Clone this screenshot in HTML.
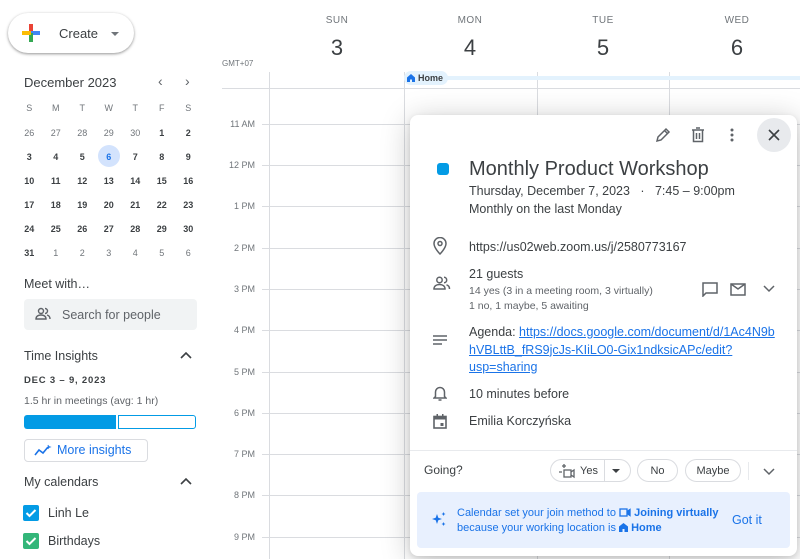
<!DOCTYPE html>
<html><head><meta charset="utf-8"><style>
*{margin:0;padding:0;box-sizing:border-box}
body{width:800px;height:559px;overflow:hidden;background:#fff;font-family:"Liberation Sans",Arial,sans-serif;color:#3c4043;position:relative}
.a{position:absolute}
.hl{position:absolute;left:262px;width:538px;height:1px;background:#dadce0}
.vl{position:absolute;top:72px;bottom:0;width:1px;background:#dadce0}
.tm{position:absolute;left:215px;width:40px;text-align:right;font-size:9px;color:#70757a}
.dh{position:absolute;width:60px;text-align:center;font-size:10px;color:#70757a;letter-spacing:.5px}
.dn{position:absolute;width:60px;text-align:center;font-size:22px;color:#3c4043}
.cal td{width:26.5px;height:24px;text-align:center;font-size:9px;color:#3c4043;font-weight:bold}
.cal td.g{color:#70757a;font-weight:normal}
.cal th{height:26px;font-size:9px;color:#70757a;font-weight:normal}
.ic{position:absolute;left:433px}
.t{position:absolute;left:469px;font-size:12px;color:#3c4043}
.pill{position:absolute;top:459px;height:23px;border:1px solid #dadce0;border-radius:12px;font-size:11px;color:#3c4043;text-align:center;line-height:23px}
</style></head><body>

<div class="a" style="left:8px;top:13px;width:126px;height:40px;border-radius:20px;box-shadow:0 1px 3px rgba(0,0,0,.3),0 1px 2px rgba(0,0,0,.15);background:#fff"></div>
<svg class="a" style="left:20px;top:22px" width="22" height="22" viewBox="0 0 22 22"><rect x="9" y="2" width="4" height="9" fill="#ea4335"/><rect x="11" y="9" width="9" height="4" fill="#4285f4"/><rect x="9" y="11" width="4" height="9" fill="#34a853"/><rect x="2" y="9" width="9" height="4" fill="#fbbc04"/></svg>
<div class="a" style="left:59px;top:26px;font-size:13px;color:#3c4043">Create</div>
<div class="a" style="left:111px;top:32px;border-left:4px solid transparent;border-right:4px solid transparent;border-top:4px solid #70757a"></div>

<div class="a" style="left:24px;top:75px;font-size:13px;color:#3c4043">December 2023</div>
<div class="a" style="left:158px;top:73px;font-size:14px;color:#5f6368">&#8249;</div>
<div class="a" style="left:185px;top:73px;font-size:14px;color:#5f6368">&#8250;</div>
<div class="a" style="left:98px;top:145px;width:22px;height:22px;border-radius:50%;background:#d3e3fd"></div>
<table class="a cal" style="left:16px;top:95px;border-collapse:collapse">
<tr><th>S</th><th>M</th><th>T</th><th>W</th><th>T</th><th>F</th><th>S</th></tr>
<tr><td class="g">26</td><td class="g">27</td><td class="g">28</td><td class="g">29</td><td class="g">30</td><td>1</td><td>2</td></tr>
<tr><td>3</td><td>4</td><td>5</td><td style="color:#1a73e8">6</td><td>7</td><td>8</td><td>9</td></tr>
<tr><td>10</td><td>11</td><td>12</td><td>13</td><td>14</td><td>15</td><td>16</td></tr>
<tr><td>17</td><td>18</td><td>19</td><td>20</td><td>21</td><td>22</td><td>23</td></tr>
<tr><td>24</td><td>25</td><td>26</td><td>27</td><td>28</td><td>29</td><td>30</td></tr>
<tr><td>31</td><td class="g">1</td><td class="g">2</td><td class="g">3</td><td class="g">4</td><td class="g">5</td><td class="g">6</td></tr>
</table>

<div class="a" style="left:24px;top:277px;font-size:12.5px">Meet with…</div>
<div class="a" style="left:24px;top:299px;width:173px;height:31px;background:#f1f3f4;border-radius:4px"></div>
<svg class="a" style="left:35px;top:307px" width="16" height="14" viewBox="0 0 16 14" fill="none" stroke="#5f6368" stroke-width="1.4"><circle cx="6" cy="4" r="2.5"/><path d="M1 12c0-3 2.5-4 5-4s5 1 5 4z"/><path d="M10 1.5a2.5 2.5 0 0 1 0 5M12 8c2 .5 3 1.5 3 4"/></svg>
<div class="a" style="left:62px;top:308px;font-size:12.5px;color:#5f6368">Search for people</div>

<div class="a" style="left:24px;top:349px;font-size:12.5px">Time Insights</div>
<svg class="a" style="left:179px;top:350px" width="14" height="10"><path d="M2 8l5-5 5 5" fill="none" stroke="#3c4043" stroke-width="1.6"/></svg>
<div class="a" style="left:24px;top:375px;font-size:9.5px;font-weight:bold;letter-spacing:.8px;color:#3c4043">DEC 3 – 9, 2023</div>
<div class="a" style="left:24px;top:395px;font-size:10.5px;color:#5f6368">1.5 hr in meetings (avg: 1 hr)</div>
<div class="a" style="left:24px;top:415px;width:92px;height:14px;background:#039be5;border-radius:3px 0 0 3px"></div>
<div class="a" style="left:118px;top:415px;width:78px;height:14px;border:1.5px solid #039be5;border-radius:0 3px 3px 0"></div>
<div class="a" style="left:24px;top:439px;width:124px;height:23px;border:1px solid #dadce0;border-radius:4px"></div>
<svg class="a" style="left:34px;top:444px" width="18" height="13" viewBox="0 0 18 13" fill="none" stroke="#1a73e8" stroke-width="1.6"><path d="M1 11l4-5 4 3 5-6"/><path d="M14 1l.5 1.5L16 3l-1.5.5L14 5" stroke-width="1"/></svg>
<div class="a" style="left:57px;top:443px;font-size:12.5px;color:#1a73e8">More insights</div>

<div class="a" style="left:24px;top:475px;font-size:12.5px">My calendars</div>
<svg class="a" style="left:179px;top:476px" width="14" height="10"><path d="M2 8l5-5 5 5" fill="none" stroke="#3c4043" stroke-width="1.6"/></svg>
<svg class="a" style="left:23px;top:505px" width="16" height="16"><rect width="16" height="16" rx="2" fill="#039be5"/><path d="M3.5 8l3 3 6-6" fill="none" stroke="#fff" stroke-width="2"/></svg>
<div class="a" style="left:48px;top:506px;font-size:12.5px">Linh Le</div>
<svg class="a" style="left:23px;top:533px" width="16" height="16"><rect width="16" height="16" rx="2" fill="#33b679"/><path d="M3.5 8l3 3 6-6" fill="none" stroke="#fff" stroke-width="2"/></svg>
<div class="a" style="left:48px;top:534px;font-size:12.5px">Birthdays</div>

<div class="dh" style="left:307px;top:15px">SUN</div><div class="dn" style="left:307px;top:35px">3</div>
<div class="dh" style="left:440px;top:15px">MON</div><div class="dn" style="left:440px;top:35px">4</div>
<div class="dh" style="left:573px;top:15px">TUE</div><div class="dn" style="left:573px;top:35px">5</div>
<div class="dh" style="left:707px;top:15px">WED</div><div class="dn" style="left:707px;top:35px">6</div>
<div class="a" style="left:222px;top:59px;font-size:8px;color:#70757a">GMT+07</div>
<div class="vl" style="left:269px"></div><div class="vl" style="left:404px"></div><div class="vl" style="left:537px"></div><div class="vl" style="left:669px"></div>
<div class="hl" style="top:88px;left:222px;width:578px"></div>
<div class="a" style="left:404px;top:76px;width:396px;height:4px;background:#e3f2fd"></div>
<div class="a" style="left:404px;top:71px;width:44px;height:14px;background:#e3f2fd;border-radius:7px;font-size:9px;font-weight:bold;color:#3c4043;line-height:14px;padding-left:14px">Home</div>
<svg class="a" style="left:407px;top:74px" width="8" height="8"><path d="M4 0L0 3.5V8h3V5.5h2V8h3V3.5z" fill="#1a73e8"/></svg>
<div class="hl" style="top:124px"></div><div class="tm" style="top:119px">11 AM</div>
<div class="hl" style="top:165px"></div><div class="tm" style="top:160px">12 PM</div>
<div class="hl" style="top:206px"></div><div class="tm" style="top:201px">1 PM</div>
<div class="hl" style="top:248px"></div><div class="tm" style="top:243px">2 PM</div>
<div class="hl" style="top:289px"></div><div class="tm" style="top:284px">3 PM</div>
<div class="hl" style="top:330px"></div><div class="tm" style="top:325px">4 PM</div>
<div class="hl" style="top:372px"></div><div class="tm" style="top:367px">5 PM</div>
<div class="hl" style="top:413px"></div><div class="tm" style="top:408px">6 PM</div>
<div class="hl" style="top:454px"></div><div class="tm" style="top:449px">7 PM</div>
<div class="hl" style="top:495px"></div><div class="tm" style="top:490px">8 PM</div>
<div class="hl" style="top:537px"></div><div class="tm" style="top:532px">9 PM</div>

<div class="a" style="left:410px;top:115px;width:387px;height:441px;background:#fff;border-radius:8px;box-shadow:0 4px 30px rgba(0,0,0,.22),0 2px 6px rgba(0,0,0,.12)"></div>
<svg class="a" style="left:655px;top:127px" width="16" height="16" viewBox="0 0 16 16" fill="none" stroke="#5f6368" stroke-width="1.5"><path d="M2 14l1-4 8-8 3 3-8 8z"/><path d="M9.5 3.5l3 3"/></svg>
<svg class="a" style="left:691px;top:127px" width="14" height="16" viewBox="0 0 14 16" fill="none" stroke="#5f6368" stroke-width="1.5"><path d="M1 3h12M5 1h4M2.5 3v11.5h9V3M5.5 6v6M8.5 6v6"/></svg>
<svg class="a" style="left:730px;top:128px" width="4" height="14"><circle cx="2" cy="2" r="1.5" fill="#5f6368"/><circle cx="2" cy="7" r="1.5" fill="#5f6368"/><circle cx="2" cy="12" r="1.5" fill="#5f6368"/></svg>
<div class="a" style="left:757px;top:118px;width:34px;height:34px;border-radius:50%;background:#e8eaed"></div>
<svg class="a" style="left:767px;top:128px" width="14" height="14"><path d="M2 2l10 10M12 2L2 12" stroke="#3c4043" stroke-width="1.6"/></svg>

<div class="a" style="left:437px;top:163px;width:12px;height:12px;border-radius:3px;background:#039be5"></div>
<div class="a" style="left:469px;top:158px;font-size:20px;color:#3c4043">Monthly Product Workshop</div>
<div class="t" style="top:184px;font-size:12.5px">Thursday, December 7, 2023 &nbsp;&nbsp;·&nbsp;&nbsp; 7:45 – 9:00pm</div>
<div class="t" style="top:202px;font-size:12.5px">Monthly on the last Monday</div>

<svg class="ic" style="top:237px" width="14" height="18" viewBox="0 0 14 18" fill="none" stroke="#5f6368" stroke-width="1.5"><path d="M7 17s6-6 6-10.5A6 6 0 0 0 1 6.5C1 11 7 17 7 17z"/><circle cx="7" cy="6.5" r="2"/></svg>
<div class="t" style="top:240px;font-size:12.5px">https://us02web.zoom.us/j/2580773167</div>

<svg class="ic" style="top:276px" width="18" height="14" viewBox="0 0 18 14" fill="none" stroke="#5f6368" stroke-width="1.5"><circle cx="6.5" cy="4" r="2.7"/><path d="M1 13c0-3 2.5-4.5 5.5-4.5S12 10 12 13z"/><path d="M11 1.3a2.7 2.7 0 0 1 0 5.4M13.5 8.8c2 .6 3 2 3 4.2"/></svg>
<div class="t" style="top:267px;font-size:12.5px">21 guests</div>
<div class="t" style="top:285px;font-size:10.5px;color:#5f6368">14 yes (3 in a meeting room, 3 virtually)</div>
<div class="t" style="top:300px;font-size:10.5px;color:#5f6368">1 no, 1 maybe, 5 awaiting</div>
<svg class="a" style="left:702px;top:282px" width="16" height="15" viewBox="0 0 16 15" fill="none" stroke="#5f6368" stroke-width="1.5"><path d="M1 1h14v10H4l-3 3z"/></svg>
<svg class="a" style="left:730px;top:283px" width="16" height="13" viewBox="0 0 16 13" fill="none" stroke="#5f6368" stroke-width="1.5"><rect x="1" y="1" width="14" height="11"/><path d="M1 1l7 5 7-5"/></svg>
<svg class="a" style="left:763px;top:285px" width="12" height="8"><path d="M1 1l5 5 5-5" fill="none" stroke="#5f6368" stroke-width="1.5"/></svg>

<svg class="ic" style="top:335px" width="14" height="12"><path d="M0 1h14M0 5h14M0 9h9" stroke="#5f6368" stroke-width="1.4"/></svg>
<div class="t" style="top:324px;font-size:12.5px;line-height:17.5px;width:320px">Agenda: <span style="color:#1a73e8;text-decoration:underline">https://docs.google.com/document/d/1Ac4N9b hVBLttB_fRS9jcJs-KIiLO0-Gix1ndksicAPc/edit? usp=sharing</span></div>

<svg class="ic" style="top:386px" width="14" height="16" viewBox="0 0 14 16" fill="none" stroke="#5f6368" stroke-width="1.5"><path d="M7 1.5a4.5 4.5 0 0 0-4.5 4.5v4.5L1 12h12l-1.5-1.5V6A4.5 4.5 0 0 0 7 1.5z"/><path d="M5.5 14h3"/></svg>
<div class="t" style="top:387px;font-size:12.5px">10 minutes before</div>
<svg class="ic" style="top:414px" width="14" height="15" viewBox="0 0 14 15"><rect x="1" y="2.5" width="12" height="11.5" fill="none" stroke="#5f6368" stroke-width="1.6"/><rect x="1" y="2.5" width="12" height="3" fill="#5f6368"/><rect x="3.5" y="0" width="1.5" height="3" fill="#5f6368"/><rect x="9" y="0" width="1.5" height="3" fill="#5f6368"/><rect x="7.5" y="9" width="3" height="3" fill="#5f6368"/></svg>
<div class="t" style="top:414px;font-size:12.5px">Emilia Korczyńska</div>

<div class="a" style="left:410px;top:450px;width:387px;height:1px;background:#e8eaed"></div>
<div class="a" style="left:424px;top:463px;font-size:12px">Going?</div>
<div class="pill" style="left:550px;width:81px"></div>
<div class="a" style="left:604px;top:460px;width:1px;height:22px;background:#dadce0"></div>
<svg class="a" style="left:558px;top:463px" width="18" height="16" viewBox="0 0 18 16" fill="none" stroke="#5f6368" stroke-width="1.3"><path d="M6 1v4M4 3h4M1 9h3"/><rect x="6" y="7" width="7" height="7"/><path d="M13 9l3-2v7l-3-2"/></svg>
<div class="a" style="left:580px;top:465px;font-size:11px">Yes</div>
<div class="a" style="left:612px;top:469px;border-left:4px solid transparent;border-right:4px solid transparent;border-top:4px solid #3c4043"></div>
<div class="pill" style="left:637px;width:41px">No</div>
<div class="pill" style="left:685px;width:56px">Maybe</div>
<div class="a" style="left:748px;top:462px;width:1px;height:18px;background:#e8eaed"></div>
<svg class="a" style="left:763px;top:468px" width="12" height="8"><path d="M1 1l5 5 5-5" fill="none" stroke="#5f6368" stroke-width="1.5"/></svg>

<div class="a" style="left:417px;top:492px;width:373px;height:56px;background:#e8f0fe;border-radius:4px"></div>
<svg class="a" style="left:431px;top:511px" width="16" height="16" viewBox="0 0 16 16" fill="#1a73e8"><path d="M6 3l1.3 3.7L11 8l-3.7 1.3L6 13l-1.3-3.7L1 8l3.7-1.3z"/><path d="M12.5 1l.6 1.4 1.4.6-1.4.6-.6 1.4-.6-1.4L10.5 3l1.4-.6z"/><path d="M12.5 11l.6 1.4 1.4.6-1.4.6-.6 1.4-.6-1.4-1.4-.6 1.4-.6z"/></svg>
<div class="a" style="left:457px;top:506px;font-size:11px;color:#1a73e8;line-height:15px">Calendar set your join method to <svg width="12" height="9" style="vertical-align:-1px" viewBox="0 0 12 9" fill="none" stroke="#1a73e8" stroke-width="1.3"><rect x="1" y="1" width="7" height="7"/><path d="M8 3.5l3-2v6l-3-2" fill="#1a73e8"/></svg> <b>Joining virtually</b><br>because your working location is <svg width="9" height="9" style="vertical-align:-1px"><path d="M4.5 0L0 3.5V9h3.5V6h2v3H9V3.5z" fill="#1a73e8"/></svg> <b>Home</b></div>
<div class="a" style="left:732px;top:513px;font-size:12.5px;color:#1a73e8">Got it</div>
</body></html>
